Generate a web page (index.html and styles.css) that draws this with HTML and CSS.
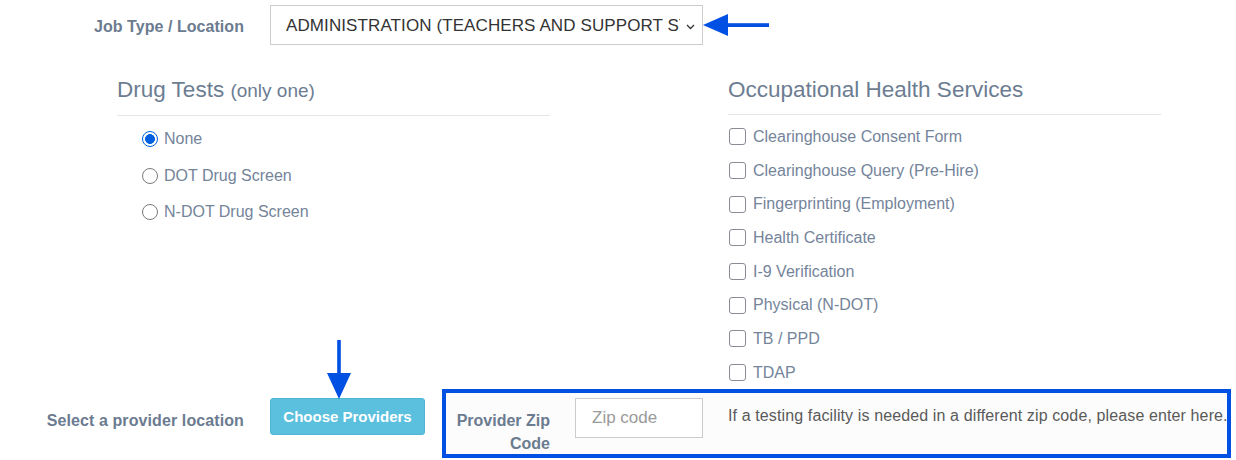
FILE: index.html
```html
<!DOCTYPE html>
<html lang="en">
<head>
<meta charset="utf-8">
<title>Services</title>
<link rel="stylesheet" href="styles.css">
</head>
<body>
<div class="page">
  <div class="top-row">
    <label class="field-label job-label">Job Type / Location</label>
    <div class="select">
      <span class="select-text">ADMINISTRATION (TEACHERS AND SUPPORT STAFF)</span>
      <svg class="chevron" width="9" height="6" viewBox="0 0 9 6"><path d="M1 1 L4.5 4.5 L8 1" fill="none" stroke="#333" stroke-width="1.3"/></svg>
    </div>
  </div>

  <div class="columns">
    <div class="col col-left">
      <h3 class="col-title">Drug Tests <small>(only one)</small></h3>
      <div class="radio-list">
        <label class="opt radio-opt"><input type="radio" name="drug" checked> None</label>
        <label class="opt radio-opt"><input type="radio" name="drug"> DOT Drug Screen</label>
        <label class="opt radio-opt"><input type="radio" name="drug"> N-DOT Drug Screen</label>
      </div>
    </div>
    <div class="col col-right">
      <h3 class="col-title">Occupational Health Services</h3>
      <div class="check-list">
        <label class="opt check-opt"><input type="checkbox"> Clearinghouse Consent Form</label>
        <label class="opt check-opt"><input type="checkbox"> Clearinghouse Query (Pre-Hire)</label>
        <label class="opt check-opt"><input type="checkbox"> Fingerprinting (Employment)</label>
        <label class="opt check-opt"><input type="checkbox"> Health Certificate</label>
        <label class="opt check-opt"><input type="checkbox"> I-9 Verification</label>
        <label class="opt check-opt"><input type="checkbox"> Physical (N-DOT)</label>
        <label class="opt check-opt"><input type="checkbox"> TB / PPD</label>
        <label class="opt check-opt"><input type="checkbox"> TDAP</label>
      </div>
    </div>
  </div>

  <div class="bottom-row">
    <label class="field-label provider-label">Select a provider location</label>
    <button class="btn-info" type="button">Choose Providers</button>
    <div class="zip-box">
      <label class="zip-label">Provider Zip Code</label>
      <input class="zip-input" type="text" placeholder="Zip code">
      <p class="zip-help">If a testing facility is needed in a different zip code, please enter here.</p>
    </div>
  </div>

  <svg class="arrow arrow-left" width="66" height="22" viewBox="0 0 66 22">
    <polygon points="0,11 25,0 25,22" fill="#0050e4"/>
    <rect x="22" y="9.2" width="44" height="3.8" fill="#0050e4"/>
  </svg>
  <svg class="arrow arrow-down" width="26" height="60" viewBox="0 0 26 60">
    <rect x="11.2" y="0" width="3.6" height="36" fill="#0050e4"/>
    <polygon points="1,33 25,33 13,59" fill="#0050e4"/>
  </svg>
</div>
</body>
</html>
```

FILE: styles.css
```css
* { box-sizing: border-box; }

html, body {
  margin: 0;
  padding: 0;
  background: #ffffff;
}

body {
  font-family: "Liberation Sans", Arial, sans-serif;
  font-size: 16px;
  color: #6f7f95;
}

.page {
  position: relative;
  width: 1236px;
  height: 460px;
  overflow: hidden;
}

.field-label {
  width: 244px;
  flex: none;
  text-align: right;
  font-weight: bold;
  font-size: 16px;
  color: #6b7b90;
}

.job-label {
  padding-top: 3px;
  letter-spacing: 0.05px;
}

.top-row {
  display: flex;
  align-items: center;
  margin-top: 5px;
  height: 40px;
}

.select {
  margin-left: 26px;
  width: 433px;
  height: 40px;
  border: 1px solid #cccccc;
  background: #fff;
  display: flex;
  align-items: center;
  padding-left: 15px;
  padding-right: 7px;
  padding-top: 1px;
  gap: 6px;
}

.select-text {
  flex: 1;
  overflow: hidden;
  white-space: nowrap;
  font-size: 17px;
  letter-spacing: 0.1px;
  color: #333333;
}

.chevron { flex: none; margin-top: 2px; }

.columns {
  display: flex;
  padding-left: 117px;
  gap: 178px;
  margin-top: 32px;
}

.col { width: 433px; }

.col-title {
  margin: 0;
  font-weight: normal;
  font-size: 22.5px;
  line-height: 26px;
  color: #6c7d92;
  padding-bottom: 11px;
  border-bottom: 1px solid #e5e5e5;
}

.col-title small {
  font-size: 19px;
}

.radio-list,
.check-list {
  display: flex;
  flex-direction: column;
}

.radio-list { margin-top: 5px; }
.check-list { margin-top: 5px; }

.opt {
  display: flex;
  align-items: center;
  font-size: 16px;
  color: #74849a;
}

.radio-opt {
  height: 36.5px;
  padding-left: 25px;
}

.check-opt {
  height: 33.7px;
  padding-left: 1px;
}

.radio-opt input {
  appearance: none;
  -webkit-appearance: none;
  margin: 0 6px 0 0;
  width: 16px;
  height: 16px;
  border-radius: 50%;
  border: 1px solid #7a7a7a;
  background: #fff;
}

.radio-opt input:checked {
  border: 1.5px solid #0060df;
  background: radial-gradient(circle, #0060df 0 4.6px, #ffffff 5.2px);
}

.check-opt input {
  appearance: none;
  -webkit-appearance: none;
  margin: 0 7px 0 0;
  width: 17px;
  height: 17px;
  border-radius: 3px;
  border: 1px solid #8b8b95;
  background: #fff;
}

.bottom-row {
  display: flex;
  align-items: flex-start;
  margin-top: -1px;
}

.provider-label {
  margin-top: 22px;
  line-height: 20px;
  letter-spacing: 0.1px;
}

.btn-info {
  margin: 9px 0 0 26px;
  width: 155px;
  height: 37px;
  border: 1px solid #4fb5d5;
  border-radius: 3px;
  background: #5bc0de;
  color: #ffffff;
  font-family: "Liberation Sans", Arial, sans-serif;
  font-weight: bold;
  font-size: 15px;
  padding: 0;
}

.zip-box {
  margin-left: 17px;
  width: 789px;
  height: 69px;
  border: 4px solid #0050e4;
  background: #fcfcfc;
  display: flex;
  align-items: flex-start;
}

.zip-label {
  width: 104px;
  flex: none;
  text-align: right;
  font-weight: bold;
  font-size: 16px;
  line-height: 23px;
  color: #6b7b90;
  padding-top: 16px;
}

.zip-input {
  margin: 5px 0 0 25px;
  width: 128px;
  height: 40px;
  border: 1px solid #cccccc;
  background: #fff;
  padding: 0 0 0 16px;
  font-family: "Liberation Sans", Arial, sans-serif;
  font-size: 17px;
  color: #333;
}

.zip-input::placeholder { color: #9a9a9a; }

.zip-help {
  margin: 13px 0 0 25px;
  font-size: 16px;
  line-height: 20px;
  letter-spacing: 0.12px;
  color: #5a5a5a;
  white-space: nowrap;
}

.arrow { position: absolute; }

.arrow-left { left: 703px; top: 14px; }

.arrow-down { left: 326px; top: 340px; }
```
